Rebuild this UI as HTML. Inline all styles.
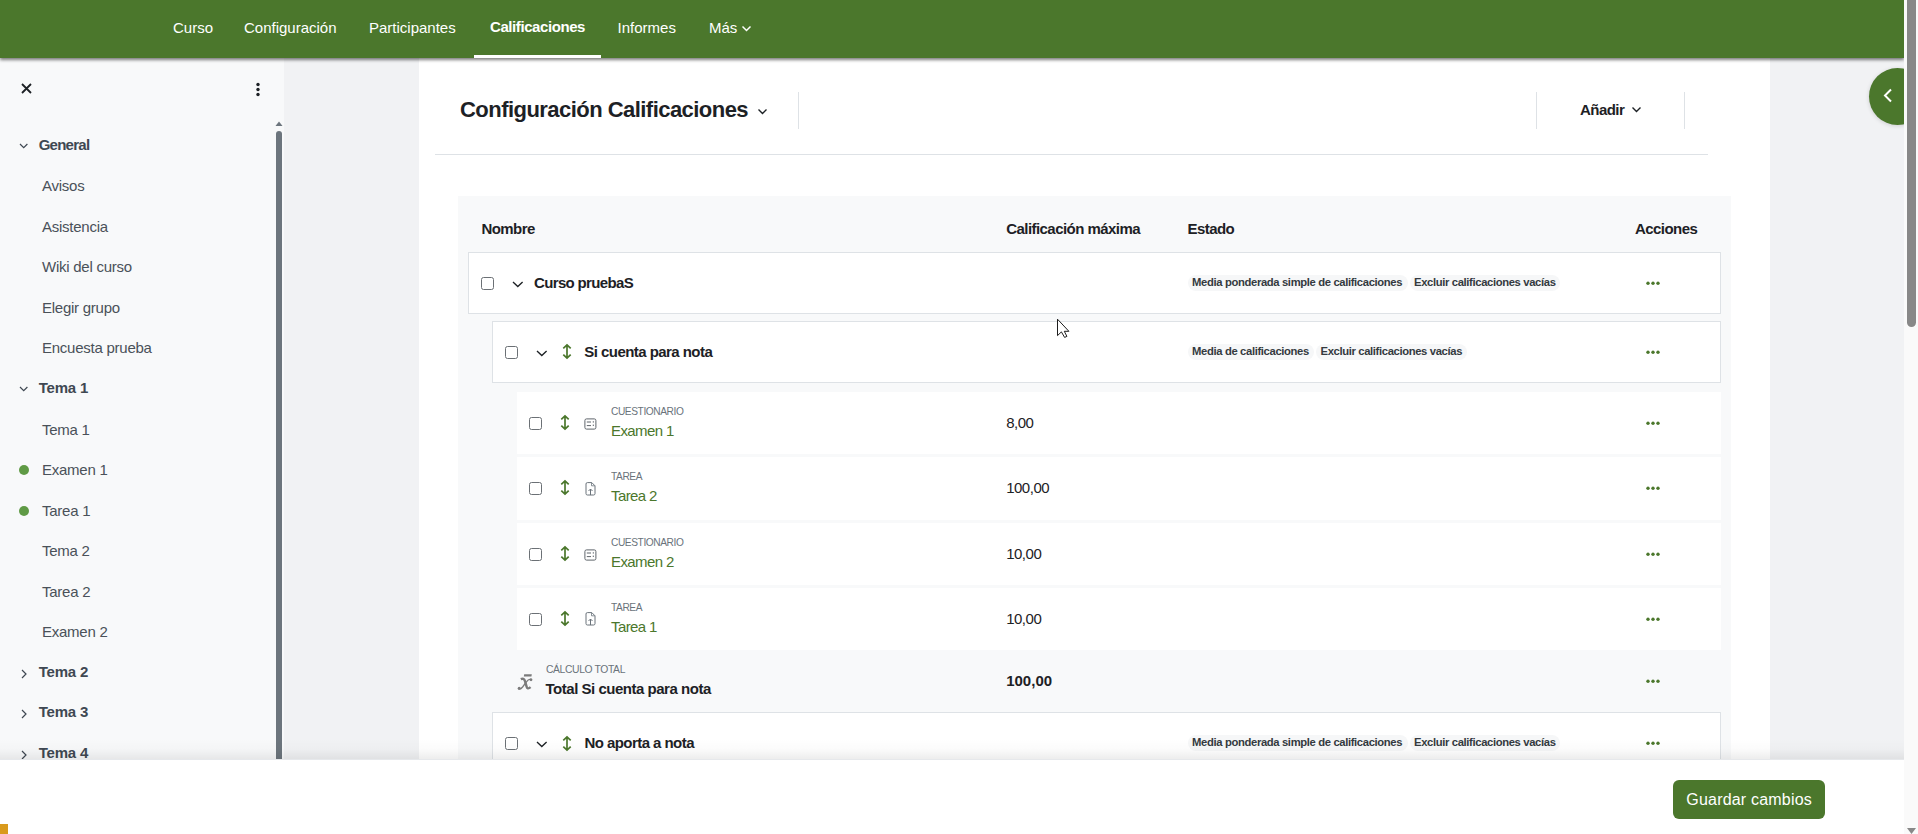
<!DOCTYPE html>
<html><head><meta charset="utf-8"><title>Configuración Calificaciones</title>
<style>
html,body{margin:0;padding:0;}
body{width:1918px;height:834px;overflow:hidden;position:relative;background:#f1f2f4;font-family:"Liberation Sans",sans-serif;}
.t{position:absolute;line-height:1;white-space:nowrap;}
.r{position:absolute;box-sizing:border-box;}
svg{position:absolute;overflow:visible;}
</style></head><body>
<div class="r" style="left:419px;top:57px;width:1351px;height:702px;background:#fff;"></div>
<div class="r" style="left:0px;top:57px;width:284px;height:702px;background:#f8f9fa;"></div>
<div class="t" style="left:460px;top:98.7px;font-size:22px;font-weight:700;color:#1d2125;letter-spacing:-0.54px;">Configuración Calificaciones</div>
<svg style="left:757px;top:108px" width="11" height="8"><path d="M1.5 1.5 L5.5 5.5 L9.5 1.5" fill="none" stroke="#1d2125" stroke-width="1.4"/></svg>
<div class="r" style="left:798px;top:92px;width:1px;height:37px;background:#dee2e6;"></div>
<div class="r" style="left:1536px;top:92px;width:1px;height:37px;background:#dee2e6;"></div>
<div class="r" style="left:1684px;top:92px;width:1px;height:37px;background:#dee2e6;"></div>
<div class="t" style="left:1580px;top:101.6px;font-size:15px;font-weight:700;color:#1d2125;letter-spacing:-0.55px;">Añadir</div>
<svg style="left:1631px;top:106px" width="11" height="8"><path d="M1.5 1.5 L5.5 5.5 L9.5 1.5" fill="none" stroke="#1d2125" stroke-width="1.4"/></svg>
<div class="r" style="left:435px;top:154px;width:1273px;height:1px;background:#dee2e6;"></div>
<div class="r" style="left:458px;top:196px;width:1273px;height:563px;background:#f8f9fa;"></div>
<div class="t" style="left:481.4px;top:221px;font-size:15px;font-weight:700;color:#1d2125;letter-spacing:-0.55px;">Nombre</div>
<div class="t" style="left:1006.2px;top:221px;font-size:15px;font-weight:700;color:#1d2125;letter-spacing:-0.55px;">Calificación máxima</div>
<div class="t" style="left:1187.5px;top:221px;font-size:15px;font-weight:700;color:#1d2125;letter-spacing:-0.55px;">Estado</div>
<div class="t" style="left:1635px;top:221px;font-size:15px;font-weight:700;color:#1d2125;letter-spacing:-0.55px;">Acciones</div>
<div class="r" style="left:468px;top:252px;width:1253px;height:62px;border:1px solid #dee2e6;background:#fff;"></div>
<div class="r" style="left:481px;top:277px;width:13px;height:13px;border:1px solid #6b7075;border-radius:2.5px;background:#fff;"></div>
<svg style="left:511.5px;top:280.5px" width="12" height="8"><path d="M1 1 L5.8 5.6 L10.6 1" fill="none" stroke="#1d2125" stroke-width="1.35"/></svg>
<div class="t" style="left:534px;top:275px;font-size:15px;font-weight:700;color:#1d2125;letter-spacing:-0.65px;">Curso pruebaS</div>
<div class="r" style="left:1187.6px;top:275px;width:220.4000000000001px;height:16px;background:#f6f7f8;border-radius:8px;"></div>
<div class="t" style="left:1192.1px;top:276.7px;font-size:11.25px;font-weight:700;color:#343a40;letter-spacing:-0.36px;">Media ponderada simple de calificaciones</div>
<div class="r" style="left:1409.5px;top:275px;width:150.5px;height:16px;background:#f6f7f8;border-radius:8px;"></div>
<div class="t" style="left:1414.0px;top:276.7px;font-size:11.25px;font-weight:700;color:#343a40;letter-spacing:-0.36px;">Excluir calificaciones vacías</div>
<svg style="left:1645.5px;top:281px" width="15" height="5"><circle cx="2" cy="2.2" r="1.7" fill="#4b772c"/><circle cx="7" cy="2.2" r="1.7" fill="#4b772c"/><circle cx="12" cy="2.2" r="1.7" fill="#4b772c"/></svg>
<div class="r" style="left:492px;top:321px;width:1229px;height:62px;border:1px solid #dee2e6;background:#fff;"></div>
<div class="r" style="left:505px;top:346px;width:13px;height:13px;border:1px solid #6b7075;border-radius:2.5px;background:#fff;"></div>
<svg style="left:535.5px;top:349.5px" width="12" height="8"><path d="M1 1 L5.8 5.6 L10.6 1" fill="none" stroke="#1d2125" stroke-width="1.35"/></svg>
<svg style="left:561.5px;top:344px" width="10" height="16"><path d="M5 1.5 V13.5 M1.3 4.4 L5 0.9 L8.7 4.4 M1.3 10.6 L5 14.1 L8.7 10.6" fill="none" stroke="#4b772c" stroke-width="1.7"/></svg>
<div class="t" style="left:584.3px;top:344px;font-size:15px;font-weight:700;color:#1d2125;letter-spacing:-0.55px;">Si cuenta para nota</div>
<div class="r" style="left:1187.6px;top:344px;width:126.40000000000009px;height:16px;background:#f6f7f8;border-radius:8px;"></div>
<div class="t" style="left:1192.1px;top:345.7px;font-size:11.25px;font-weight:700;color:#343a40;letter-spacing:-0.36px;">Media de calificaciones</div>
<div class="r" style="left:1316px;top:344px;width:151px;height:16px;background:#f6f7f8;border-radius:8px;"></div>
<div class="t" style="left:1320.5px;top:345.7px;font-size:11.25px;font-weight:700;color:#343a40;letter-spacing:-0.36px;">Excluir calificaciones vacías</div>
<svg style="left:1645.5px;top:350px" width="15" height="5"><circle cx="2" cy="2.2" r="1.7" fill="#4b772c"/><circle cx="7" cy="2.2" r="1.7" fill="#4b772c"/><circle cx="12" cy="2.2" r="1.7" fill="#4b772c"/></svg>
<div class="r" style="left:517px;top:392px;width:1204px;height:62px;background:#fff;"></div>
<div class="r" style="left:529px;top:417px;width:13px;height:13px;border:1px solid #6b7075;border-radius:2.5px;background:#fff;"></div>
<svg style="left:559.8px;top:415px" width="10" height="16"><path d="M5 1.5 V13.5 M1.3 4.4 L5 0.9 L8.7 4.4 M1.3 10.6 L5 14.1 L8.7 10.6" fill="none" stroke="#4b772c" stroke-width="1.7"/></svg>
<svg style="left:583.5px;top:418px" width="13" height="12"><rect x="0.9" y="0.9" width="11" height="10.2" rx="1.6" fill="none" stroke="#5f656b" stroke-width="1"/><path d="M2.8 4 H7 M2.8 7.6 H7" stroke="#5f656b" stroke-width="1"/><path d="M9.3 3.2 V4.6 M9.3 6.6 V8" stroke="#5f656b" stroke-width="1"/></svg>
<div class="t" style="left:611px;top:405.8px;font-size:11px;color:#6a737b;letter-spacing:-0.45px;transform:scaleX(0.925);transform-origin:0 0;">CUESTIONARIO</div>
<div class="t" style="left:611px;top:422.8px;font-size:15px;color:#4b772c;letter-spacing:-0.6px;">Examen 1</div>
<div class="t" style="left:1006.2px;top:414.8px;font-size:15px;color:#1d2125;letter-spacing:-0.5px;">8,00</div>
<svg style="left:1645.5px;top:421px" width="15" height="5"><circle cx="2" cy="2.2" r="1.7" fill="#4b772c"/><circle cx="7" cy="2.2" r="1.7" fill="#4b772c"/><circle cx="12" cy="2.2" r="1.7" fill="#4b772c"/></svg>
<div class="r" style="left:517px;top:457px;width:1204px;height:63px;background:#fff;"></div>
<div class="r" style="left:529px;top:482px;width:13px;height:13px;border:1px solid #6b7075;border-radius:2.5px;background:#fff;"></div>
<svg style="left:559.8px;top:480px" width="10" height="16"><path d="M5 1.5 V13.5 M1.3 4.4 L5 0.9 L8.7 4.4 M1.3 10.6 L5 14.1 L8.7 10.6" fill="none" stroke="#4b772c" stroke-width="1.7"/></svg>
<svg style="left:584.5px;top:482px" width="11" height="14"><path d="M1 2 Q1 0.6 2.4 0.6 H6.8 L10 3.8 V11.6 Q10 13 8.6 13 H2.4 Q1 13 1 11.6 Z" fill="none" stroke="#6a737b" stroke-width="1"/><path d="M6.5 0.8 V3.8 H9.8" fill="none" stroke="#6a737b" stroke-width="0.8"/><path d="M5.5 13 V7 M3.5 9 L5.5 7 L7.5 9" fill="none" stroke="#6a737b" stroke-width="1"/></svg>
<div class="t" style="left:611px;top:471.3px;font-size:11px;color:#6a737b;letter-spacing:-0.45px;transform:scaleX(0.925);transform-origin:0 0;">TAREA</div>
<div class="t" style="left:611px;top:488.3px;font-size:15px;color:#4b772c;letter-spacing:-0.6px;">Tarea 2</div>
<div class="t" style="left:1006.2px;top:480.3px;font-size:15px;color:#1d2125;letter-spacing:-0.5px;">100,00</div>
<svg style="left:1645.5px;top:486px" width="15" height="5"><circle cx="2" cy="2.2" r="1.7" fill="#4b772c"/><circle cx="7" cy="2.2" r="1.7" fill="#4b772c"/><circle cx="12" cy="2.2" r="1.7" fill="#4b772c"/></svg>
<div class="r" style="left:517px;top:523px;width:1204px;height:62px;background:#fff;"></div>
<div class="r" style="left:529px;top:548px;width:13px;height:13px;border:1px solid #6b7075;border-radius:2.5px;background:#fff;"></div>
<svg style="left:559.8px;top:546px" width="10" height="16"><path d="M5 1.5 V13.5 M1.3 4.4 L5 0.9 L8.7 4.4 M1.3 10.6 L5 14.1 L8.7 10.6" fill="none" stroke="#4b772c" stroke-width="1.7"/></svg>
<svg style="left:583.5px;top:549px" width="13" height="12"><rect x="0.9" y="0.9" width="11" height="10.2" rx="1.6" fill="none" stroke="#5f656b" stroke-width="1"/><path d="M2.8 4 H7 M2.8 7.6 H7" stroke="#5f656b" stroke-width="1"/><path d="M9.3 3.2 V4.6 M9.3 6.6 V8" stroke="#5f656b" stroke-width="1"/></svg>
<div class="t" style="left:611px;top:536.8px;font-size:11px;color:#6a737b;letter-spacing:-0.45px;transform:scaleX(0.925);transform-origin:0 0;">CUESTIONARIO</div>
<div class="t" style="left:611px;top:553.8px;font-size:15px;color:#4b772c;letter-spacing:-0.6px;">Examen 2</div>
<div class="t" style="left:1006.2px;top:545.8px;font-size:15px;color:#1d2125;letter-spacing:-0.5px;">10,00</div>
<svg style="left:1645.5px;top:552px" width="15" height="5"><circle cx="2" cy="2.2" r="1.7" fill="#4b772c"/><circle cx="7" cy="2.2" r="1.7" fill="#4b772c"/><circle cx="12" cy="2.2" r="1.7" fill="#4b772c"/></svg>
<div class="r" style="left:517px;top:588px;width:1204px;height:62px;background:#fff;"></div>
<div class="r" style="left:529px;top:613px;width:13px;height:13px;border:1px solid #6b7075;border-radius:2.5px;background:#fff;"></div>
<svg style="left:559.8px;top:611px" width="10" height="16"><path d="M5 1.5 V13.5 M1.3 4.4 L5 0.9 L8.7 4.4 M1.3 10.6 L5 14.1 L8.7 10.6" fill="none" stroke="#4b772c" stroke-width="1.7"/></svg>
<svg style="left:584.5px;top:612px" width="11" height="14"><path d="M1 2 Q1 0.6 2.4 0.6 H6.8 L10 3.8 V11.6 Q10 13 8.6 13 H2.4 Q1 13 1 11.6 Z" fill="none" stroke="#6a737b" stroke-width="1"/><path d="M6.5 0.8 V3.8 H9.8" fill="none" stroke="#6a737b" stroke-width="0.8"/><path d="M5.5 13 V7 M3.5 9 L5.5 7 L7.5 9" fill="none" stroke="#6a737b" stroke-width="1"/></svg>
<div class="t" style="left:611px;top:601.8px;font-size:11px;color:#6a737b;letter-spacing:-0.45px;transform:scaleX(0.925);transform-origin:0 0;">TAREA</div>
<div class="t" style="left:611px;top:618.8px;font-size:15px;color:#4b772c;letter-spacing:-0.6px;">Tarea 1</div>
<div class="t" style="left:1006.2px;top:610.8px;font-size:15px;color:#1d2125;letter-spacing:-0.5px;">10,00</div>
<svg style="left:1645.5px;top:617px" width="15" height="5"><circle cx="2" cy="2.2" r="1.7" fill="#4b772c"/><circle cx="7" cy="2.2" r="1.7" fill="#4b772c"/><circle cx="12" cy="2.2" r="1.7" fill="#4b772c"/></svg>
<svg style="left:510px;top:665px" width="30" height="30"><path d="M14.2 9.3 H21.8 L21.4 11.5 H13.8 Z" fill="#7b7b7b"/><path d="M10.8 14.2 C12.6 13.4 14.2 13.6 15 16.2 L16.6 21.6 C17.1 23.4 18.2 24.2 20.6 22.2" fill="none" stroke="#7b7b7b" stroke-width="2.4"/><path d="M21.6 14.4 C19.6 13.6 17.6 15 15.8 17.6 L12.6 22 C11.2 23.8 9.6 24.4 8.2 23.6" fill="none" stroke="#7b7b7b" stroke-width="1.3"/><circle cx="21" cy="14.8" r="1.4" fill="#7b7b7b"/><circle cx="9.2" cy="23.2" r="1.5" fill="#7b7b7b"/></svg>
<div class="t" style="left:545.5px;top:663.7px;font-size:11px;color:#6a737b;letter-spacing:-0.4px;transform:scaleX(0.94);transform-origin:0 0;">CÁLCULO TOTAL</div>
<div class="t" style="left:545.5px;top:680.8px;font-size:15px;font-weight:700;color:#1d2125;letter-spacing:-0.48px;">Total Si cuenta para nota</div>
<div class="t" style="left:1006.2px;top:673px;font-size:15px;font-weight:700;color:#1d2125;">100,00</div>
<svg style="left:1645.5px;top:679px" width="15" height="5"><circle cx="2" cy="2.2" r="1.7" fill="#4b772c"/><circle cx="7" cy="2.2" r="1.7" fill="#4b772c"/><circle cx="12" cy="2.2" r="1.7" fill="#4b772c"/></svg>
<div class="r" style="left:492px;top:712px;width:1229px;height:68px;border:1px solid #dee2e6;background:#fff;"></div>
<div class="r" style="left:505px;top:737px;width:13px;height:13px;border:1px solid #6b7075;border-radius:2.5px;background:#fff;"></div>
<svg style="left:535.5px;top:740.8px" width="12" height="8"><path d="M1 1 L5.8 5.6 L10.6 1" fill="none" stroke="#1d2125" stroke-width="1.35"/></svg>
<svg style="left:561.5px;top:735.5px" width="10" height="16"><path d="M5 1.5 V13.5 M1.3 4.4 L5 0.9 L8.7 4.4 M1.3 10.6 L5 14.1 L8.7 10.6" fill="none" stroke="#4b772c" stroke-width="1.7"/></svg>
<div class="t" style="left:584.4px;top:735.2px;font-size:15px;font-weight:700;color:#1d2125;letter-spacing:-0.55px;">No aporta a nota</div>
<div class="r" style="left:1187.6px;top:735px;width:220.4000000000001px;height:16px;background:#f6f7f8;border-radius:8px;"></div>
<div class="t" style="left:1192.1px;top:736.7px;font-size:11.25px;font-weight:700;color:#343a40;letter-spacing:-0.36px;">Media ponderada simple de calificaciones</div>
<div class="r" style="left:1409.5px;top:735px;width:150.5px;height:16px;background:#f6f7f8;border-radius:8px;"></div>
<div class="t" style="left:1414.0px;top:736.7px;font-size:11.25px;font-weight:700;color:#343a40;letter-spacing:-0.36px;">Excluir calificaciones vacías</div>
<svg style="left:1645.5px;top:741px" width="15" height="5"><circle cx="2" cy="2.2" r="1.7" fill="#4b772c"/><circle cx="7" cy="2.2" r="1.7" fill="#4b772c"/><circle cx="12" cy="2.2" r="1.7" fill="#4b772c"/></svg>
<svg style="left:21px;top:83px" width="11" height="11"><path d="M1 1 L10 10 M10 1 L1 10" stroke="#1d2125" stroke-width="1.8"/></svg>
<svg style="left:255px;top:81.5px" width="6" height="15"><circle cx="3" cy="2.5" r="1.7" fill="#1d2125"/><circle cx="3" cy="7.5" r="1.7" fill="#1d2125"/><circle cx="3" cy="12.5" r="1.7" fill="#1d2125"/></svg>
<div class="t" style="left:38.7px;top:136.8px;font-size:15px;font-weight:700;color:#3f4852;letter-spacing:-0.75px;">General</div>
<svg style="left:19px;top:143.20000000000002px" width="10" height="7"><path d="M1 1 L4.7 4.7 L8.4 1" fill="none" stroke="#3f4852" stroke-width="1.2"/></svg>
<div class="t" style="left:42px;top:178.33px;font-size:15px;color:#4a5159;letter-spacing:-0.25px;">Avisos</div>
<div class="t" style="left:42px;top:218.86px;font-size:15px;color:#4a5159;letter-spacing:-0.25px;">Asistencia</div>
<div class="t" style="left:42px;top:259.39px;font-size:15px;color:#4a5159;letter-spacing:-0.25px;">Wiki del curso</div>
<div class="t" style="left:42px;top:299.92px;font-size:15px;color:#4a5159;letter-spacing:-0.25px;">Elegir grupo</div>
<div class="t" style="left:42px;top:340.45000000000005px;font-size:15px;color:#4a5159;letter-spacing:-0.25px;">Encuesta prueba</div>
<div class="t" style="left:38.7px;top:379.98px;font-size:15px;font-weight:700;color:#3f4852;letter-spacing:-0.2px;">Tema 1</div>
<svg style="left:19px;top:386.38px" width="10" height="7"><path d="M1 1 L4.7 4.7 L8.4 1" fill="none" stroke="#3f4852" stroke-width="1.2"/></svg>
<div class="t" style="left:42px;top:421.51000000000005px;font-size:15px;color:#4a5159;letter-spacing:-0.25px;">Tema 1</div>
<div class="t" style="left:42px;top:462.04px;font-size:15px;color:#4a5159;letter-spacing:-0.25px;">Examen 1</div>
<div class="r" style="left:18.6px;top:465.04px;width:10.2px;height:10.199999999999989px;background:#5f9a45;border-radius:50%;"></div>
<div class="t" style="left:42px;top:502.56999999999994px;font-size:15px;color:#4a5159;letter-spacing:-0.25px;">Tarea 1</div>
<div class="r" style="left:18.6px;top:505.56999999999994px;width:10.2px;height:10.200000000000045px;background:#5f9a45;border-radius:50%;"></div>
<div class="t" style="left:42px;top:543.1px;font-size:15px;color:#4a5159;letter-spacing:-0.25px;">Tema 2</div>
<div class="t" style="left:42px;top:583.6300000000001px;font-size:15px;color:#4a5159;letter-spacing:-0.25px;">Tarea 2</div>
<div class="t" style="left:42px;top:624.1600000000001px;font-size:15px;color:#4a5159;letter-spacing:-0.25px;">Examen 2</div>
<div class="t" style="left:38.7px;top:663.69px;font-size:15px;font-weight:700;color:#3f4852;letter-spacing:-0.2px;">Tema 2</div>
<svg style="left:21px;top:668.69px" width="7" height="11"><path d="M1 1 L5 5 L1 9" fill="none" stroke="#3f4852" stroke-width="1.2"/></svg>
<div class="t" style="left:38.7px;top:704.22px;font-size:15px;font-weight:700;color:#3f4852;letter-spacing:-0.2px;">Tema 3</div>
<svg style="left:21px;top:709.22px" width="7" height="11"><path d="M1 1 L5 5 L1 9" fill="none" stroke="#3f4852" stroke-width="1.2"/></svg>
<div class="t" style="left:38.7px;top:744.75px;font-size:15px;font-weight:700;color:#3f4852;letter-spacing:-0.2px;">Tema 4</div>
<svg style="left:21px;top:749.75px" width="7" height="11"><path d="M1 1 L5 5 L1 9" fill="none" stroke="#3f4852" stroke-width="1.2"/></svg>
<svg style="left:275px;top:120px" width="8" height="7"><path d="M0.5 6 L4 1.5 L7.5 6 Z" fill="#6c757d"/></svg>
<div class="r" style="left:276px;top:131px;width:6px;height:628px;background:#6c757d;border-radius:3px 3px 0 0;"></div>
<div class="r" style="left:0px;top:739px;width:1904px;height:20px;background:linear-gradient(to bottom,rgba(0,0,0,0),rgba(0,0,0,0.015) 50%,rgba(0,0,0,0.07));"></div>
<div class="r" style="left:0px;top:759px;width:1904px;height:75px;background:#fff;border-top:1px solid #e6e8eb;"></div>
<div class="r" style="left:1673px;top:780px;width:152px;height:39px;background:#4b772c;border-radius:6px;"></div>
<div class="t" style="left:1686.3px;top:791.7px;font-size:16px;color:#fff;letter-spacing:0.2px;">Guardar cambios</div>
<div class="r" style="left:0px;top:824px;width:8px;height:10px;background:#d99a1c;"></div>
<div class="r" style="left:0px;top:0px;width:1904px;height:58px;background:#4b772c;box-shadow:0 2px 3px rgba(0,0,0,0.5);"></div>
<div class="t" style="left:173px;top:20px;font-size:15px;color:#fff;">Curso</div>
<div class="t" style="left:244px;top:20px;font-size:15px;color:#fff;">Configuración</div>
<div class="t" style="left:369px;top:20px;font-size:15px;color:#fff;">Participantes</div>
<div class="t" style="left:490px;top:18.5px;font-size:15px;font-weight:700;color:#fff;letter-spacing:-0.42px;">Calificaciones</div>
<div class="t" style="left:617.6px;top:20px;font-size:15px;color:#fff;">Informes</div>
<div class="t" style="left:709px;top:20px;font-size:15px;color:#fff;">Más</div>
<svg style="left:741px;top:25px" width="11" height="8"><path d="M1.5 1.5 L5.5 5.5 L9.5 1.5" fill="none" stroke="#fff" stroke-width="1.5"/></svg>
<div class="r" style="left:474px;top:55px;width:127px;height:3px;background:#fff;"></div>
<div class="r" style="left:1869px;top:68px;width:57px;height:57px;border-radius:50%;background:#4b772c;box-shadow:0 1px 4px rgba(0,0,0,0.15);"></div>
<svg style="left:1882px;top:88px" width="12" height="15"><path d="M9 1.5 L3 7.5 L9 13.5" fill="none" stroke="#fff" stroke-width="2"/></svg>
<svg style="left:1050px;top:314px" width="30" height="30"><path d="M7.5 5.2 L7.5 21.6 L11.4 17.9 L14.6 23.4 L16.9 22.4 L14.3 17.3 L18.9 17.3 Z" fill="#fff" stroke="#111" stroke-width="0.95" stroke-linejoin="miter"/></svg>
<div class="r" style="left:1904px;top:0px;width:14px;height:834px;background:#fafafa;"></div>
<div class="r" style="left:1907px;top:0px;width:9px;height:327px;background:#888;border-radius:0 0 4.5px 4.5px;"></div>
<svg style="left:1906px;top:827px" width="11" height="8"><path d="M1 1 H10 L5.5 7 Z" fill="#888"/></svg>
</body></html>
